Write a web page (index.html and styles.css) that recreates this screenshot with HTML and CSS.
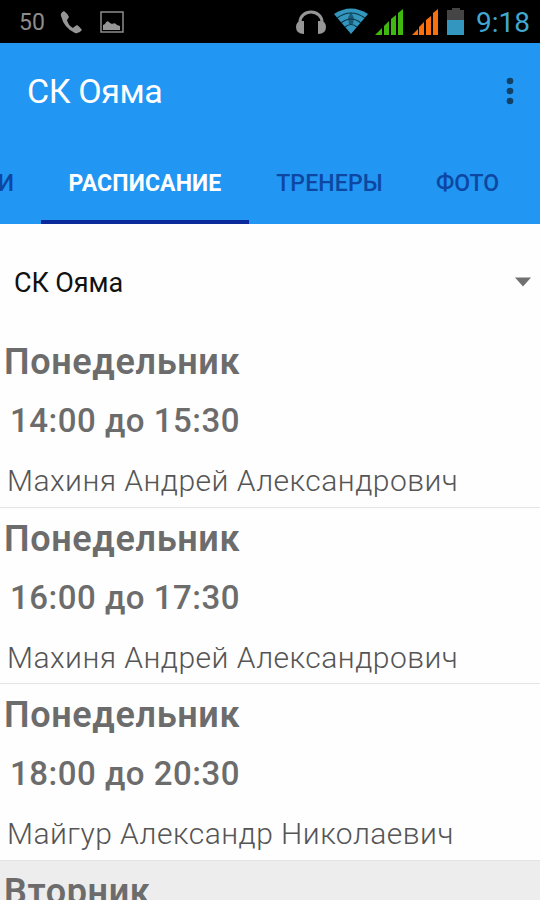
FILE: index.html
```html
<!DOCTYPE html>
<html lang="ru">
<head>
    <meta charset="UTF-8">
    <title>СК Ояма</title>
    <link rel="stylesheet" href="styles.css">
</head>
<body>
    <div class="status-bar">
        <span class="status-count">50</span>
        <svg class="icon-phone" width="24" height="24" viewBox="0 0 24 24">
            <path d="M5 1 Q1 3 2 6 Q5 18 16 23 Q20 24 23 20 Q20 16 18 15 Q16 16 14 18 Q9 15 8 10 L10 7 Q8 3 5 1 Z" fill="#969696"/>
        </svg>
        <svg class="icon-image" width="24" height="22" viewBox="0 0 24 22">
            <rect x="1" y="1" width="22" height="20" fill="none" stroke="#8d8d8d" stroke-width="1.5"/>
            <path d="M3 19 V14 L5 13 Q7 8 10 12 L12 13 Q15 11 17 14 L20 15 V19 Z" fill="#969696"/>
        </svg>
        <svg class="icons-right" width="174" height="36" viewBox="0 0 174 36">
            <!-- headphones -->
            <path d="M4 24 V22 A11 10 0 0 1 26 22 V24" fill="none" stroke="#969696" stroke-width="3"/>
            <path d="M8 21 Q0 20 0 27 Q0 34 8 34 Z M22 21 Q30 20 30 27 Q30 34 22 34 Z" fill="#969696"/>
            <!-- wifi -->
            <path d="M38 14 Q55 3 72 14 L55 34 Z" fill="#3296be"/>
            <path d="M41 18 Q55 8 69 18 M45 23 Q55 15 65 23 M49 27 Q55 22 61 27" fill="none" stroke="#0b3445" stroke-width="1.2"/>
            <path d="M55 12 L58 18 L57 24 H53 L52 18 Z" fill="#0b3445" opacity=".6"/>
            <!-- signal -->
            <path d="M79 35 L86 28 V35 Z M88 35 V26 L93 21 V35 Z M95 35 V19 L100 15 V35 Z M102 35 V13 L107 9 V35 Z" fill="#3fb80f"/>
            <path d="M116 35 L122 29 V35 Z M123 35 V27 L128 22 V35 Z M130 35 V20 L135 16 V35 Z M137 35 V13 L142 9 V35 Z" fill="#fa700f"/>
            <!-- battery -->
            <path d="M151 10 H156 V8 H164 V10 H168 V20 H151 Z" fill="#454545"/>
            <rect x="151" y="20" width="17" height="15" fill="#3296be"/>
        </svg>
        <span class="clock">9:18</span>
    </div>

    <div class="app-bar">
        <h1 class="title">СК Ояма</h1>
        <svg class="menu" width="8" height="28" viewBox="0 0 8 28">
            <circle cx="4" cy="4" r="3.3" fill="#114265"/>
            <circle cx="4" cy="14" r="3.3" fill="#114265"/>
            <circle cx="4" cy="24" r="3.3" fill="#114265"/>
        </svg>
    </div>

    <div class="tabs">
        <div class="tab tab-cut">И</div>
        <div class="tab active">РАСПИСАНИЕ</div>
        <div class="tab tab-trainers">ТРЕНЕРЫ</div>
        <div class="tab tab-photo">ФОТО</div>
    </div>

    <div class="spinner">
        <span class="spinner-text">СК Ояма</span>
        <svg width="16" height="10" viewBox="0 0 16 10">
            <path d="M0 0.5 H16 L8 9.5 Z" fill="#707070"/>
        </svg>
    </div>

    <div class="list">
        <div class="row">
            <div class="day">Понедельник</div>
            <div class="time">14:00 до 15:30</div>
            <div class="name">Махиня Андрей Александрович</div>
        </div>
        <div class="row">
            <div class="day">Понедельник</div>
            <div class="time">16:00 до 17:30</div>
            <div class="name">Махиня Андрей Александрович</div>
        </div>
        <div class="row">
            <div class="day">Понедельник</div>
            <div class="time">18:00 до 20:30</div>
            <div class="name">Майгур Александр Николаевич</div>
        </div>
        <div class="row row-gray">
            <div class="day">Вторник</div>
        </div>
    </div>
</body>
</html>
```

FILE: styles.css
```css
* {
    box-sizing: border-box;
}
body {
    margin: 0;
    width: 540px;
    height: 900px;
    overflow: hidden;
    display: flex;
    flex-direction: column;
    background-color: #fefefe;
    font-family: Roboto, sans-serif;
    white-space: nowrap;
}
.status-bar {
    display: flex;
    flex-shrink: 0;
    height: 43px;
    padding-left: 19px;
    background-color: #000;
}
.status-count {
    width: 40px;
    font-size: 23px;
    line-height: 45px;
    color: #8c8c8c;
}
.icon-phone {
    margin-top: 10px;
}
.icon-image {
    margin: 11px 0 0 17px;
}
.icons-right {
    margin-left: 172px;
}
.clock {
    margin-left: 6px;
    font-size: 28px;
    line-height: 46px;
    color: #40a8d0;
}
.app-bar {
    display: flex;
    flex-shrink: 0;
    justify-content: space-between;
    align-items: center;
    height: 96px;
    padding: 0 26px 0 27px;
    background-color: #2196f3;
}
.title {
    margin: 0;
    font-size: 34px;
    font-weight: 400;
    letter-spacing: -0.4px;
    color: #fff;
}
.tabs {
    display: flex;
    flex-shrink: 0;
    height: 85px;
    background-color: #2196f3;
}
.tab {
    height: 85px;
    font-size: 23px;
    font-weight: 500;
    line-height: 89px;
    color: #0d47a1;
}
.tab-cut {
    display: flex;
    justify-content: flex-end;
    width: 41px;
    padding-right: 27px;
}
.active {
    width: 208px;
    border-bottom: 4px solid #0a2a9c;
    font-weight: 700;
    letter-spacing: 0.15px;
    text-align: center;
    color: #fff;
}
.tab-trainers {
    width: 161px;
    letter-spacing: 0.15px;
    text-align: center;
}
.tab-photo {
    width: 115px;
    text-align: center;
}
.spinner {
    display: flex;
    flex-shrink: 0;
    justify-content: space-between;
    align-items: center;
    height: 107px;
    padding: 11px 9px 0 14px;
}
.spinner svg {
    margin-bottom: 3px;
}
.spinner-text {
    font-size: 27px;
    line-height: 32px;
    letter-spacing: -0.1px;
    color: #111;
}
.list {
    flex: 1;
    min-height: 0;
    overflow: hidden;
}
.row {
    height: 176.6px;
    padding-top: 9px;
    border-bottom: 1px solid #e4e4e4;
    color: #6c6c6c;
}
.day {
    padding-left: 4px;
    font-size: 36px;
    font-weight: 600;
    line-height: 44px;
    letter-spacing: 0.65px;
}
.time {
    padding-left: 10px;
    margin-top: 15px;
    font-size: 33px;
    font-weight: 500;
    line-height: 44px;
    letter-spacing: 0.5px;
}
.name {
    padding-left: 7px;
    margin-top: 18px;
    font-size: 30px;
    font-weight: 300;
    line-height: 40px;
    letter-spacing: 0.47px;
    color: #555;
}
.row-gray {
    background-color: #ededed;
}
```
